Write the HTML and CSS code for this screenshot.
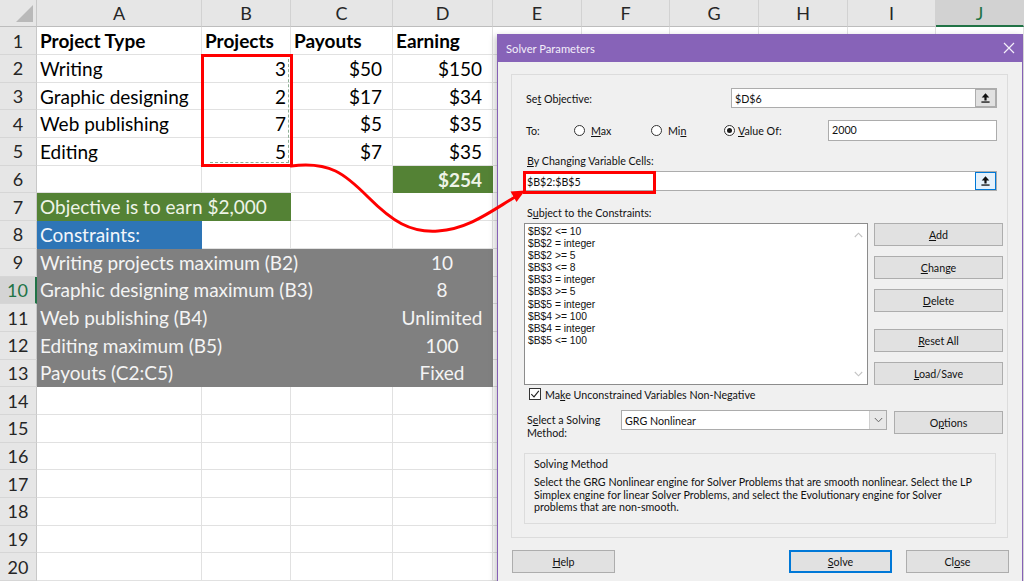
FILE: index.html
```html
<!DOCTYPE html>
<html>
<head>
<meta charset="utf-8">
<title>Solver Parameters</title>
<link rel="stylesheet" href="styles.css">
</head>
<body>
<div class="screen">
  <div class="grid">
    <div class="corner"><svg width="36" height="26" viewBox="0 0 36 26"><polygon points="33,5 33,22 16,22" fill="#b9b9b9"/></svg></div>
    <div class="ch">A</div><div class="ch">B</div><div class="ch">C</div><div class="ch">D</div><div class="ch">E</div><div class="ch">F</div><div class="ch">G</div><div class="ch">H</div><div class="ch">I</div><div class="ch sel">J</div>

    <div class="rh">1</div><div class="c bold">Project Type</div><div class="c bold">Projects</div><div class="c bold">Payouts</div><div class="c bold">Earning</div><div class="c"></div><div class="c"></div><div class="c"></div><div class="c"></div><div class="c"></div><div class="c"></div>

    <div class="rh">2</div><div class="c">Writing</div><div class="c rn">3</div><div class="c rc">$50</div><div class="c rc">$150</div><div class="c"></div><div class="c"></div><div class="c"></div><div class="c"></div><div class="c"></div><div class="c"></div>

    <div class="rh">3</div><div class="c">Graphic designing</div><div class="c rn">2</div><div class="c rc">$17</div><div class="c rc">$34</div><div class="c"></div><div class="c"></div><div class="c"></div><div class="c"></div><div class="c"></div><div class="c"></div>

    <div class="rh">4</div><div class="c">Web publishing</div><div class="c rn">7</div><div class="c rc">$5</div><div class="c rc">$35</div><div class="c"></div><div class="c"></div><div class="c"></div><div class="c"></div><div class="c"></div><div class="c"></div>

    <div class="rh">5</div><div class="c">Editing</div><div class="c rn">5</div><div class="c rc">$7</div><div class="c rc">$35</div><div class="c"></div><div class="c"></div><div class="c"></div><div class="c"></div><div class="c"></div><div class="c"></div>

    <div class="rh">6</div><div class="c"></div><div class="c"></div><div class="c"></div><div class="c rc green bold">$254</div><div class="c"></div><div class="c"></div><div class="c"></div><div class="c"></div><div class="c"></div><div class="c"></div>

    <div class="rh">7</div><div class="c green span2">Objective is to earn $2,000</div><div class="c"></div><div class="c"></div><div class="c"></div><div class="c"></div><div class="c"></div><div class="c"></div><div class="c"></div><div class="c"></div>

    <div class="rh">8</div><div class="c blue">Constraints:</div><div class="c"></div><div class="c"></div><div class="c"></div><div class="c"></div><div class="c"></div><div class="c"></div><div class="c"></div><div class="c"></div><div class="c"></div>

    <div class="rh">9</div><div class="c gray span3">Writing projects maximum (B2)</div><div class="c gray ctr">10</div><div class="c"></div><div class="c"></div><div class="c"></div><div class="c"></div><div class="c"></div><div class="c"></div>

    <div class="rh active">10</div><div class="c gray span3">Graphic designing maximum (B3)</div><div class="c gray ctr">8</div><div class="c"></div><div class="c"></div><div class="c"></div><div class="c"></div><div class="c"></div><div class="c"></div>

    <div class="rh">11</div><div class="c gray span3">Web publishing (B4)</div><div class="c gray ctr">Unlimited</div><div class="c"></div><div class="c"></div><div class="c"></div><div class="c"></div><div class="c"></div><div class="c"></div>

    <div class="rh">12</div><div class="c gray span3">Editing maximum (B5)</div><div class="c gray ctr">100</div><div class="c"></div><div class="c"></div><div class="c"></div><div class="c"></div><div class="c"></div><div class="c"></div>

    <div class="rh">13</div><div class="c gray span3">Payouts (C2:C5)</div><div class="c gray ctr">Fixed</div><div class="c"></div><div class="c"></div><div class="c"></div><div class="c"></div><div class="c"></div><div class="c"></div>

    <div class="rh">14</div><div class="c"></div><div class="c"></div><div class="c"></div><div class="c"></div><div class="c"></div><div class="c"></div><div class="c"></div><div class="c"></div><div class="c"></div><div class="c"></div>
    <div class="rh">15</div><div class="c"></div><div class="c"></div><div class="c"></div><div class="c"></div><div class="c"></div><div class="c"></div><div class="c"></div><div class="c"></div><div class="c"></div><div class="c"></div>
    <div class="rh">16</div><div class="c"></div><div class="c"></div><div class="c"></div><div class="c"></div><div class="c"></div><div class="c"></div><div class="c"></div><div class="c"></div><div class="c"></div><div class="c"></div>
    <div class="rh">17</div><div class="c"></div><div class="c"></div><div class="c"></div><div class="c"></div><div class="c"></div><div class="c"></div><div class="c"></div><div class="c"></div><div class="c"></div><div class="c"></div>
    <div class="rh">18</div><div class="c"></div><div class="c"></div><div class="c"></div><div class="c"></div><div class="c"></div><div class="c"></div><div class="c"></div><div class="c"></div><div class="c"></div><div class="c"></div>
    <div class="rh">19</div><div class="c"></div><div class="c"></div><div class="c"></div><div class="c"></div><div class="c"></div><div class="c"></div><div class="c"></div><div class="c"></div><div class="c"></div><div class="c"></div>
    <div class="rh">20</div><div class="c"></div><div class="c"></div><div class="c"></div><div class="c"></div><div class="c"></div><div class="c"></div><div class="c"></div><div class="c"></div><div class="c"></div><div class="c"></div>
  </div>

  <div class="range-box"><div class="marquee"></div></div>

  <div class="dialog">
    <div class="titlebar">
      <span class="title">Solver Parameters</span>
      <svg class="xbtn" width="12" height="12" viewBox="0 0 12 12"><path d="M1 1 L11 11 M11 1 L1 11" stroke="#f4f0fa" stroke-width="1.2"/></svg>
    </div>
    <div class="dbody">
      <div class="group">
        <div class="row r-obj">
          <span class="lbl l-obj">Se<u>t</u> Objective:</span>
          <div class="field f-obj"><span class="val">$D$6</span><span class="pick"><svg width="9" height="10" viewBox="0 0 9 10"><path d="M4.5 0.3 L8.3 4.4 H5.6 V7.4 H3.4 V4.4 H0.7 Z" fill="#111"/><rect x="0.4" y="8.4" width="8.2" height="1.3" fill="#111"/></svg></span></div>
        </div>
        <div class="row r-to">
          <span class="lbl l-to">To:</span>
          <span class="opt o-max"><span class="radio"></span><span><u>M</u>ax</span></span>
          <span class="opt o-min"><span class="radio"></span><span>Mi<u>n</u></span></span>
          <span class="opt o-val"><span class="radio on"></span><span><u>V</u>alue Of:</span></span>
          <div class="field f-val"><span class="val">2000</span></div>
        </div>
        <div class="lbl l-block l-by"><u>B</u>y Changing Variable Cells:</div>
        <div class="field f-var"><span class="val">$B$2:$B$5</span><span class="pick pick-focus"><svg width="9" height="10" viewBox="0 0 9 10"><path d="M4.5 0.3 L8.3 4.4 H5.6 V7.4 H3.4 V4.4 H0.7 Z" fill="#111"/><rect x="0.4" y="8.4" width="8.2" height="1.3" fill="#111"/></svg></span><span class="redbox"></span></div>
        <div class="lbl l-block l-sub">S<u>u</u>bject to the Constraints:</div>
        <div class="row r-list">
          <div class="list">
            <div class="items">
              <div>$B$2 &lt;= 10</div>
              <div>$B$2 = integer</div>
              <div>$B$2 &gt;= 5</div>
              <div>$B$3 &lt;= 8</div>
              <div>$B$3 = integer</div>
              <div>$B$3 &gt;= 5</div>
              <div>$B$5 = integer</div>
              <div>$B$4 &gt;= 100</div>
              <div>$B$4 = integer</div>
              <div>$B$5 &lt;= 100</div>
            </div>
            <div class="sbar">
              <svg width="9" height="6" viewBox="0 0 9 6"><path d="M0.8 5 L4.5 1.2 L8.2 5" fill="none" stroke="#c4c4c4" stroke-width="1.1"/></svg>
              <svg width="9" height="6" viewBox="0 0 9 6"><path d="M0.8 1 L4.5 4.8 L8.2 1" fill="none" stroke="#c4c4c4" stroke-width="1.1"/></svg>
            </div>
          </div>
          <div class="sidebtns">
            <div class="btn b-add"><span><u>A</u>dd</span></div>
            <div class="btn b-chg"><span><u>C</u>hange</span></div>
            <div class="btn b-del"><span><u>D</u>elete</span></div>
            <div class="btn b-rst"><span><u>R</u>eset All</span></div>
            <div class="btn b-ld"><span><u>L</u>oad/Save</span></div>
          </div>
        </div>
        <div class="row r-chk">
          <span class="chk"><svg width="10" height="10" viewBox="0 0 10 10"><path d="M1.3 5.2 L4 7.9 L8.8 1.8" fill="none" stroke="#222" stroke-width="1.1"/></svg></span>
          <span class="lbl">Ma<u>k</u>e Unconstrained Variables Non-Negative</span>
        </div>
        <div class="row r-sel">
          <span class="lbl l-sel">S<u>e</u>lect a Solving<br>Method:</span>
          <div class="select"><span class="val">GRG Nonlinear</span><span class="dd"><svg width="9" height="6" viewBox="0 0 9 6"><path d="M0.8 1 L4.5 4.8 L8.2 1" fill="none" stroke="#666" stroke-width="1"/></svg></span></div>
          <div class="btn b-opt"><span>O<u>p</u>tions</span></div>
        </div>
        <div class="method">
          <div class="m-title">Solving Method</div>
          <div class="m-text">Select the GRG Nonlinear engine for Solver Problems that are smooth nonlinear. Select the LP<br>Simplex engine for linear Solver Problems, and select the Evolutionary engine for Solver<br>problems that are non-smooth.</div>
        </div>
      </div>
      <div class="row r-bottom">
        <div class="btn b-foot"><span><u>H</u>elp</span></div>
        <div class="btn b-foot b-solve"><span><u>S</u>olve</span></div>
        <div class="btn b-foot b-close"><span>Cl<u>o</u>se</span></div>
      </div>
    </div>
  </div>

  <svg class="arrow" width="1024" height="581" viewBox="0 0 1024 581">
    <path d="M291 166 C330 161 345 174 368 197 C392 221 410 233 438 231 C468 229 490 212 515 197" fill="none" stroke="#ff0000" stroke-width="3" stroke-linecap="round"/>
    <polygon points="525,190.5 516.5,202 510.5,191.5" fill="#ff0000"/>
  </svg>
</div>
</body>
</html>
```

FILE: styles.css
```css
* {
  box-sizing: border-box;
  margin: 0;
  padding: 0;
}

body {
  margin: 0;
  background: #ffffff;
  font-family: Lato, "Liberation Sans", sans-serif;
}

.screen {
  position: relative;
  width: 1024px;
  height: 581px;
  overflow: hidden;
  background: #ffffff;
}

/* ---------- spreadsheet ---------- */
.grid {
  display: grid;
  grid-template-columns: 37px 165px 89px 102px 100px 89px 88px 89px 89px 88px 88px;
  grid-template-rows: 27px 28px repeat(19, 27.7px);
  font-size: 19px;
  color: #000000;
}

.corner {
  background: #e6e6e6;
  border-right: 1px solid #c8c8c8;
  border-bottom: 1px solid #bdbdbd;
}

.corner svg {
  display: block;
}

.ch {
  background: #e6e6e6;
  border-right: 1px solid #d2d2d2;
  border-bottom: 1px solid #bdbdbd;
  display: flex;
  align-items: center;
  justify-content: center;
  color: #262626;
  font-size: 18px;
}

.ch.sel {
  background: #d2d2d2;
  color: #217346;
  border-bottom: 2px solid #217346;
}

.rh {
  background: #e6e6e6;
  border-right: 1px solid #c8c8c8;
  border-bottom: 1px solid #d6d6d6;
  display: flex;
  align-items: center;
  justify-content: center;
  color: #262626;
  font-size: 18px;
}

.rh.active {
  background: #d4d4d4;
  color: #217346;
  border-right: 2px solid #217346;
}

.c {
  border-right: 1px solid #e1e1e1;
  border-bottom: 1px solid #e1e1e1;
  display: flex;
  align-items: center;
  padding: 0 4px 0 3px;
  white-space: nowrap;
  overflow: visible;
}

.bold {
  font-weight: 700;
}

.rn {
  justify-content: flex-end;
  padding-right: 4px;
}

.rc {
  justify-content: flex-end;
  padding-right: 10px;
}

.ctr {
  justify-content: center;
}

.span2 {
  grid-column: span 2;
}

.span3 {
  grid-column: span 3;
}

.green {
  background: #548235;
  border-color: #548235;
  color: #eef4e8;
}

.blue {
  background: #2e75b6;
  border-color: #2e75b6;
  color: #f2f6fb;
}

.gray {
  background: #808080;
  border-color: #808080;
  color: #f4f4f4;
}

.range-box {
  position: absolute;
  left: 201px;
  top: 54px;
  width: 92px;
  height: 113px;
  border: 3px solid #ff0000;
}

.marquee {
  position: absolute;
  left: 6px;
  right: 1px;
  top: 2px;
  bottom: 1px;
  border-right: 1px dashed #8fb096;
  border-bottom: 1px dashed #8fb096;
}

.arrow {
  position: absolute;
  left: 0;
  top: 0;
  z-index: 5;
  pointer-events: none;
}

/* ---------- dialog ---------- */
.dialog {
  position: absolute;
  left: 497px;
  top: 34px;
  width: 526px;
  height: 570px;
  background: #f0f0f0;
  border: 1px solid #8661b6;
  border-top: none;
  box-shadow: -2px 2px 6px rgba(0, 0, 0, 0.22);
  font-size: 10.7px;
  color: #111111;
  z-index: 2;
}

.titlebar {
  height: 28px;
  background: #8763b8;
  display: flex;
  align-items: center;
  padding: 0 7px 0 8px;
}

.title {
  color: #f3eefa;
  font-size: 11.2px;
}

.xbtn {
  margin-left: auto;
}

.dbody {
  padding: 12px 0 0 13px;
}

.group {
  width: 497px;
  height: 464px;
  border: 1px solid #dcdcdc;
  padding-top: 13px;
}

.row {
  display: flex;
  align-items: center;
}

.lbl {
  white-space: nowrap;
}

.r-obj {
  margin-left: 14px;
  height: 20px;
}

.l-obj {
  width: 205px;
}

.field {
  position: relative;
  height: 20px;
  background: #ffffff;
  border: 1px solid #acacac;
  display: flex;
  align-items: center;
  padding-left: 3px;
}

.val {
  white-space: nowrap;
}

.f-obj {
  width: 266px;
}

.pick {
  margin-left: auto;
  width: 21px;
  height: 18px;
  background: #e1e1e1;
  border: 1px solid #adadad;
  display: flex;
  align-items: center;
  justify-content: center;
}

.pick-focus {
  background: #e5f1fb;
  border-color: #0078d7;
}

.r-to {
  margin-top: 12px;
  margin-left: 14px;
  height: 21px;
}

.l-to {
  width: 48px;
}

.opt {
  display: flex;
  align-items: center;
  gap: 6px;
}

.o-max {
  width: 77px;
}

.o-min {
  width: 73px;
}

.o-val {
  width: 104px;
  gap: 3px;
}

.radio {
  width: 11px;
  height: 11px;
  border: 1px solid #333333;
  border-radius: 50%;
  background: #ffffff;
  display: flex;
  align-items: center;
  justify-content: center;
}

.radio.on::after {
  content: "";
  width: 5px;
  height: 5px;
  border-radius: 50%;
  background: #1a1a1a;
}

.f-val {
  width: 169px;
  height: 21px;
  align-items: flex-start;
  padding-top: 2px;
}

.l-block {
  line-height: 14px;
  margin-left: 15px;
}

.l-by {
  margin-top: 13px;
}

.f-var {
  margin-top: 3px;
  margin-left: 11px;
  width: 474px;
}

.redbox {
  position: absolute;
  left: -1px;
  top: -1px;
  width: 133px;
  height: 23px;
  border: 3px solid #ff0000;
}

.l-sub {
  margin-top: 15px;
}

.r-list {
  margin-top: 3px;
  margin-left: 12px;
  align-items: flex-start;
  gap: 6px;
}

.list {
  width: 344px;
  height: 162px;
  background: #ffffff;
  border: 1px solid #8c8c8c;
  display: flex;
}

.items {
  flex: 1;
  padding: 2px 0 0 3px;
  font-family: "Liberation Sans", Arial, sans-serif;
  font-size: 10.3px;
  line-height: 12.1px;
  color: #111111;
}

.sbar {
  width: 17px;
  display: flex;
  flex-direction: column;
  justify-content: space-between;
  align-items: center;
  padding: 8px 0 7px;
}

.sbar svg {
  display: block;
}

.sidebtns {
  display: flex;
  flex-direction: column;
  width: 129px;
}

.btn {
  height: 23px;
  background: #e1e1e1;
  border: 1px solid #adadad;
  display: flex;
  align-items: center;
  justify-content: center;
  white-space: nowrap;
}

.b-add {
  margin-top: 0;
}

.b-chg,
.b-del,
.b-ld {
  margin-top: 10px;
}

.b-rst {
  margin-top: 17px;
}

.r-chk {
  margin-top: 3px;
  margin-left: 17px;
  height: 12px;
  gap: 4px;
}

.chk {
  width: 12px;
  height: 12px;
  border: 1px solid #333333;
  background: #ffffff;
  display: flex;
  align-items: center;
  justify-content: center;
}

.r-sel {
  margin-top: 10px;
  margin-left: 15px;
  height: 28px;
  align-items: flex-start;
}

.l-sel {
  width: 94px;
  line-height: 13px;
  padding-top: 3px;
}

.select {
  width: 266px;
  height: 20px;
  background: #ffffff;
  border: 1px solid #acacac;
  display: flex;
  align-items: center;
  padding-left: 3px;
}

.dd {
  margin-left: auto;
  width: 17px;
  height: 18px;
  background: #e8e8e8;
  border-left: 1px solid #cfcfcf;
  display: flex;
  align-items: center;
  justify-content: center;
}

.b-opt {
  width: 109px;
  margin-left: 7px;
  margin-top: 1px;
}

.method {
  margin-top: 15px;
  margin-left: 12px;
  width: 472px;
  height: 71px;
  border: 1px solid #dcdcdc;
  padding: 3px 0 0 9px;
}

.m-title {
  line-height: 13px;
}

.m-text {
  margin-top: 6px;
  line-height: 12.6px;
  white-space: nowrap;
}

.r-bottom {
  margin-top: 12px;
  margin-left: 1px;
  margin-right: 13px;
}

.b-foot {
  width: 103px;
}

.b-solve {
  margin-left: auto;
  border: 2px solid #0078d7;
}

.b-close {
  margin-left: 14px;
}
```
